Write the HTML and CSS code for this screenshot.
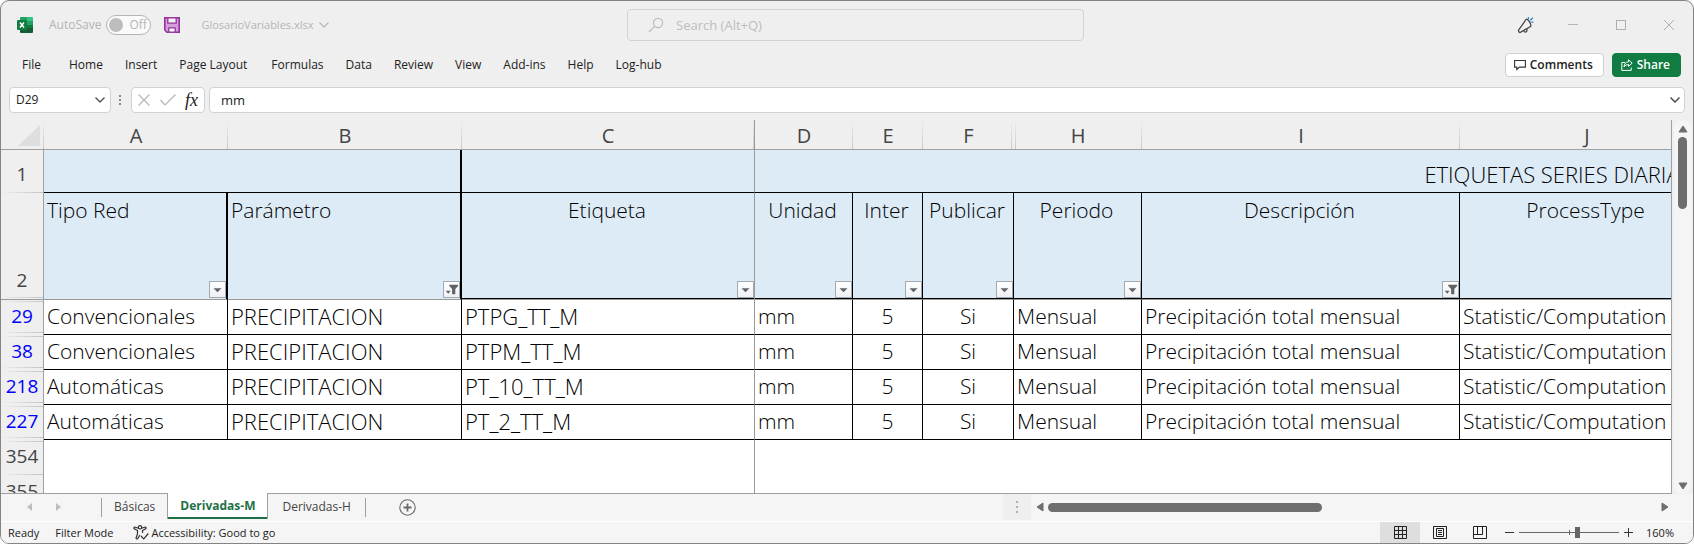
FILE: index.html
```html
<!DOCTYPE html>
<html lang="en">
<head>
<meta charset="utf-8">
<title>GlosarioVariables.xlsx</title>
<link rel="stylesheet" href="styles.css">
</head>
<body>
<svg class="defs" aria-hidden="true">
  <symbol id="drop" viewBox="0 0 17 17"><path d="M4 7h9l-4.500 4.500z" fill="#5f6367"/></symbol>
  <symbol id="funnel" viewBox="0 0 17 17"><path d="M6 3h10v1.500L12.800 8V14H9.200V8L6 4.500z" fill="#5f6367"/><path d="M2 10h5.500l-2.700 3.200z" fill="#5f6367"/></symbol>
</svg>
<div class="window">
  <header class="titlebar">
    <div class="title-left">
      <svg class="logo" width="16" height="16" viewBox="0 0 16 16"><path d="M4 0h6v4H3V1a1 1 0 0 1 1-1z" fill="#21a366"/><path d="M10 0h5a1 1 0 0 1 1 1v3h-6z" fill="#33c481"/><path d="M3 4h7v8H3z" fill="#107c41"/><path d="M10 4h6v4h-6z" fill="#21a366"/><path d="M10 8h6v4h-6z" fill="#107c41"/><path d="M3 11h13v4a1 1 0 0 1-1 1H4a1 1 0 0 1-1-1z" fill="#185c37"/><rect y="3" width="10" height="10" rx="1" fill="#107c41"/><path d="M3 5.500l4 5M7 5.500l-4 5" stroke="#fff" stroke-width="1.500"/></svg>
      <label class="autosave">AutoSave
        <span class="switch"><input type="checkbox" role="switch"><span class="off">Off</span></span>
      </label>
      <button class="plain save" aria-label="Save"><svg width="16" height="16" viewBox="0 0 16 16"><path d="M.8.8h14.400v14.400H3L.8 13z" fill="#d59ddb" stroke="#9332a0" stroke-width="1.600"/><path d="M3.800.8h8.400v5.400H3.800z" fill="#f5f0f6" stroke="#9332a0" stroke-width="1.300"/><path d="M4.800 15.200v-4.400h6.400v4.400z" fill="#fff" stroke="#9332a0" stroke-width="1.300"/></svg></button>
      <button class="plain filename">GlosarioVariables.xlsx<svg width="10" height="6" viewBox="0 0 10 6"><path d="M.5.5L5 5 9.500.5" fill="none" stroke="#b5b5b5" stroke-width="1.200"/></svg></button>
    </div>
    <label class="search">
      <svg width="16" height="16" viewBox="0 0 16 16"><circle cx="10" cy="6" r="4.600" fill="none" stroke="#bdbdbd" stroke-width="1.200"/><path d="M6.700 9.300L1 15" stroke="#bdbdbd" stroke-width="1.200"/></svg>
      <input type="text" placeholder="Search (Alt+Q)" aria-label="Search">
    </label>
    <div class="title-right">
      <button class="plain" aria-label="Coming soon"><svg width="17" height="17" viewBox="0 0 17 17"><path d="M9 2.500L1.500 13.200q-.4 1.800 1.500 2.300l11-6.300M9 2.500q1-1 3 1.500t2 5.200" fill="none" stroke="#444" stroke-width="1.300"/><path d="M6.500 13.500q1 2 2.500 1.500 1.500-.6.600-3.400" fill="none" stroke="#444" stroke-width="1.300"/><path d="M11.500 2V.3M13.300 3.200L15.800.8M14.200 5.200h2.300" stroke="#1e88c9" stroke-width="1.300"/></svg></button>
      <button class="plain" aria-label="Minimize"><svg width="10" height="10" viewBox="0 0 10 10"><path d="M0 4.500h10" stroke="#b5b5b5"/></svg></button>
      <button class="plain" aria-label="Maximize"><svg width="10" height="10" viewBox="0 0 10 10"><rect x=".5" y=".5" width="9" height="9" fill="none" stroke="#b0b0b0"/></svg></button>
      <button class="plain" aria-label="Close"><svg width="10" height="10" viewBox="0 0 10 10"><path d="M0 0l10 10M10 0L0 10" stroke="#b0b0b0"/></svg></button>
    </div>
  </header>

  <nav class="ribbon">
    <div class="menus">
      <button class="plain file">File</button><button class="plain">Home</button><button class="plain">Insert</button><button class="plain wide">Page Layout</button><button class="plain">Formulas</button><button class="plain">Data</button><button class="plain">Review</button><button class="plain">View</button><button class="plain">Add-ins</button><button class="plain">Help</button><button class="plain">Log-hub</button>
    </div>
    <div class="actions">
      <button class="action"><svg width="12" height="12" viewBox="0 0 12 12"><path d="M.6 1.500h10.800v6.600H5.500L2.800 10.500V8.100H.6z" fill="none" stroke="#333" stroke-width="1.100"/></svg>Comments</button>
      <button class="action share"><svg width="12" height="12" viewBox="0 0 12 12"><path d="M4 3.500H.8v7.900h9.400V8.500" fill="none" stroke="#fff"/><path d="M7.500.8l3.700 3.300-3.700 3.300V5.500Q4.300 5.500 3 8q.3-4.800 4.500-5.200z" fill="none" stroke="#fff"/></svg>Share</button>
    </div>
  </nav>

  <div class="formulabar">
    <div class="box namebox"><input type="text" value="D29" aria-label="Name box"><button class="plain" aria-label="Names"><svg width="10" height="6" viewBox="0 0 10 6"><path d="M.5.5L5 5 9.500.5" fill="none" stroke="#555" stroke-width="1.400"/></svg></button></div>
    <svg class="grip" width="3" height="12" viewBox="0 0 3 12"><path d="M0 1h2v2H0zM0 5h2v2H0zM0 9h2v2H0z" fill="#8a8a8a"/></svg>
    <div class="box entry">
      <button class="plain" aria-label="Cancel"><svg width="12" height="12" viewBox="0 0 12 12"><path d="M.5.5l11 11M11.500.5l-11 11" stroke="#b5b5b5" stroke-width="1.200"/></svg></button>
      <button class="plain" aria-label="Enter"><svg width="16" height="12" viewBox="0 0 16 12"><path d="M.5 6l4.500 5L15.500.5" fill="none" stroke="#b5b5b5" stroke-width="1.200"/></svg></button>
      <button class="plain fx" aria-label="Insert function">fx</button>
    </div>
    <div class="box formula"><input type="text" value="mm" aria-label="Formula"><button class="plain" aria-label="Expand"><svg width="10" height="6" viewBox="0 0 10 6"><path d="M.5.5L5 5 9.500.5" fill="none" stroke="#444" stroke-width="1.400"/></svg></button></div>
  </div>

  <main class="sheet">
    <div class="grid">
      <table>
        <colgroup><col class="c-rows"><col class="c-a"><col class="c-b"><col class="c-c"><col class="c-d"><col class="c-e"><col class="c-f"><col class="c-h"><col class="c-i"><col class="c-j"><col class="c-k"></colgroup>
        <thead>
          <tr class="letters"><th class="corner"><svg width="22" height="21" viewBox="0 0 22 21"><path d="M22 0v21H0z" fill="#dedede"/></svg></th><th>A</th><th>B</th><th class="frozen">C</th><th>D</th><th>E</th><th class="before-hidden">F</th><th class="after-hidden">H</th><th>I</th><th>J</th><th></th></tr>
        </thead>
        <tbody>
          <tr class="band"><th class="row">1</th><td colspan="2" class="thick"></td><td class="frozen"></td><td colspan="7">ETIQUETAS SERIES DIARIAS</td></tr>
          <tr class="names"><th class="row above">2</th>
            <td class="thick first">Tipo Red<button class="filter" aria-label="Filter Tipo Red"><svg><use href="#drop"/></svg></button></td>
            <td class="thick first">Parámetro<button class="filter" aria-label="Filter Parámetro"><svg><use href="#funnel"/></svg></button></td>
            <td class="frozen">Etiqueta<button class="filter" aria-label="Filter Etiqueta"><svg><use href="#drop"/></svg></button></td>
            <td>Unidad<button class="filter" aria-label="Filter Unidad"><svg><use href="#drop"/></svg></button></td>
            <td>Inter<button class="filter" aria-label="Filter Inter"><svg><use href="#drop"/></svg></button></td>
            <td>Publicar<button class="filter" aria-label="Filter Publicar"><svg><use href="#drop"/></svg></button></td>
            <td>Periodo<button class="filter" aria-label="Filter Periodo"><svg><use href="#drop"/></svg></button></td>
            <td>Descripción<button class="filter" aria-label="Filter Descripción"><svg><use href="#funnel"/></svg></button></td>
            <td>ProcessType</td><td></td></tr>
          <tr class="data"><th class="row both">29</th><td>Convencionales</td><td class="code">PRECIPITACION</td><td class="code frozen">PTPG_TT_M</td><td>mm</td><td class="mid">5</td><td class="mid">Si</td><td>Mensual</td><td>Precipitación total mensual</td><td>Statistic/Computation</td><td></td></tr>
          <tr class="data"><th class="row both">38</th><td>Convencionales</td><td class="code">PRECIPITACION</td><td class="code frozen">PTPM_TT_M</td><td>mm</td><td class="mid">5</td><td class="mid">Si</td><td>Mensual</td><td>Precipitación total mensual</td><td>Statistic/Computation</td><td></td></tr>
          <tr class="data"><th class="row both">218</th><td>Automáticas</td><td class="code">PRECIPITACION</td><td class="code frozen">PT_10_TT_M</td><td>mm</td><td class="mid">5</td><td class="mid">Si</td><td>Mensual</td><td>Precipitación total mensual</td><td>Statistic/Computation</td><td></td></tr>
          <tr class="data"><th class="row both">227</th><td>Automáticas</td><td class="code">PRECIPITACION</td><td class="code frozen">PT_2_TT_M</td><td>mm</td><td class="mid">5</td><td class="mid">Si</td><td>Mensual</td><td>Precipitación total mensual</td><td>Statistic/Computation</td><td></td></tr>
          <tr class="blank"><th class="row below">354</th><td colspan="2"></td><td class="frozen"></td><td colspan="7"></td></tr>
          <tr class="blank"><th class="row">355</th><td colspan="2"></td><td class="frozen"></td><td colspan="7"></td></tr>
        </tbody>
      </table>
    </div>
    <div class="vscroll">
      <svg width="10" height="8" viewBox="0 0 10 8"><path d="M5 1l4 6H1z" fill="#6e6e6e" stroke="#6e6e6e" stroke-linejoin="round"/></svg>
      <div class="track"><div class="thumb"></div></div>
      <svg width="10" height="8" viewBox="0 0 10 8"><path d="M5 7l4-6H1z" fill="#6e6e6e" stroke="#6e6e6e" stroke-linejoin="round"/></svg>
    </div>
  </main>

  <div class="tabbar">
    <div class="tabnav">
      <button class="plain" aria-label="Previous sheet"><svg width="5" height="8" viewBox="0 0 5 8"><path d="M5 0v8L0 4z" fill="#bdbdbd"/></svg></button>
      <button class="plain" aria-label="Next sheet"><svg width="5" height="8" viewBox="0 0 5 8"><path d="M0 0v8l5-4z" fill="#bdbdbd"/></svg></button>
    </div>
    <button class="plain tab">Básicas</button>
    <button class="plain tab active">Derivadas-M</button>
    <button class="plain tab last">Derivadas-H</button>
    <button class="plain add" aria-label="New sheet"><svg width="17" height="17" viewBox="0 0 17 17"><circle cx="8.500" cy="8.500" r="7.700" fill="none" stroke="#6a6a6a" stroke-width="1.100"/><path d="M8.500 4.500v8M4.500 8.500h8" stroke="#6a6a6a" stroke-width="1.800"/></svg></button>
    <div class="splitter"><svg width="2" height="12" viewBox="0 0 2 12"><path d="M0 0h2v2H0zM0 5h2v2H0zM0 10h2v2H0z" fill="#b0b0b0"/></svg></div>
    <div class="hscroll">
      <svg width="8" height="10" viewBox="0 0 8 10"><path d="M1 5l6-4v8z" fill="#6e6e6e" stroke="#6e6e6e" stroke-linejoin="round"/></svg>
      <div class="track"><div class="thumb"></div></div>
      <svg width="8" height="10" viewBox="0 0 8 10"><path d="M7 5L1 1v8z" fill="#6e6e6e" stroke="#6e6e6e" stroke-linejoin="round"/></svg>
    </div>
  </div>

  <footer class="status">
    <span>Ready</span><span class="mode">Filter Mode</span>
    <button class="plain access"><svg width="16" height="15" viewBox="0 0 16 15"><g fill="none" stroke="#333" stroke-width="1.200"><circle cx="7" cy="2.300" r="1.700"/><path d="M5.300 3.200L2 2Q.6 2 1 3.500L4.500 5.500V9L3 13q.2 1.400 1.600.8L7 10M8.700 3.200L12 2q1.400 0 1 1.500L9.500 5.500V8"/><path d="M8 11l2.700 2.800L15.300 8.500"/></g></svg>Accessibility: Good to go</button>
    <div class="views">
      <button class="plain view on" aria-label="Normal"><svg width="13" height="13" viewBox="0 0 13 13"><path d="M.5.5h12v12H.5zM4.500 0v13M8.500 0v13M0 4.500h13M0 8.500h13" fill="none" stroke="#222"/></svg></button>
      <button class="plain view" aria-label="Page layout"><svg width="14" height="13" viewBox="0 0 14 13"><path d="M.5.500h13v12H.5zM3.500 2.500h7v8h-7zM5 4.500h4M5 6.500h4M5 8.500h4" fill="none" stroke="#222"/></svg></button>
      <button class="plain view" aria-label="Page break preview"><svg width="14" height="13" viewBox="0 0 14 13"><path d="M.5.5h13v12H.5zM.5 8.500h9V.5M4.500.5v8" fill="none" stroke="#222"/></svg></button>
    </div>
    <div class="zoom">
      <button class="plain" aria-label="Zoom out"><svg width="9" height="9" viewBox="0 0 9 9"><path d="M0 4.500h9" stroke="#333"/></svg></button>
      <input type="range" min="10" max="210" value="128" aria-label="Zoom">
      <button class="plain" aria-label="Zoom in"><svg width="9" height="9" viewBox="0 0 9 9"><path d="M0 4.500h9M4.500 0v9" stroke="#333"/></svg></button>
      <button class="plain percent">160%</button>
    </div>
  </footer>
</div>
</body>
</html>
```

FILE: styles.css
```css
* { box-sizing: border-box; }
body { margin: 0; background: #fff; font: 12px/16px "Open Sans", "Noto Sans", sans-serif; color: #222; }
.defs { position: absolute; width: 0; height: 0; }
svg { display: block; flex: none; }
input { font: inherit; color: inherit; border: 0; background: none; padding: 0; min-width: 0; outline: 0; }
.plain { display: flex; align-items: center; border: 0; background: none; padding: 0; margin: 0; font: inherit; color: inherit; white-space: nowrap; }

.window { display: flex; flex-direction: column; height: 100vh; border: 1px solid #848484; border-radius: 9px; background: #efefef; overflow: hidden; }

.titlebar { display: flex; align-items: center; height: 46px; padding-top: 2px; color: #b5b5b5; }
.title-left { display: flex; align-items: center; width: 37%; padding-left: 16px; }
.autosave { display: flex; align-items: center; gap: 5px; margin-left: 16px; }
.switch { display: flex; align-items: center; gap: 6px; width: 45px; height: 20px; padding: 0 4px 0 2px; border: 1px solid #b5b5b5; border-radius: 10px; background: #fafafa; }
.switch input { appearance: none; width: 14px; height: 14px; margin: 0; border-radius: 50%; background: #bdbdbd; flex: none; }
.save { margin-left: 13px; }
.filename { margin-left: 21px; gap: 6px; font-size: 11px; }
.search { display: flex; align-items: center; gap: 12px; width: 27%; height: 32px; padding-left: 20px; border: 1px solid #d2d2d2; border-radius: 4px; }
.search input { flex: 1; font-size: 13px; }
.search input::placeholder { color: #bdbdbd; opacity: 1; }
.title-right { display: flex; align-items: center; gap: 38px; margin-left: auto; padding-right: 19px; }
.title-right .plain:first-child { margin-right: -4px; }

.ribbon { display: flex; align-items: center; justify-content: space-between; height: 36px; padding: 0 12px 0 21px; }
.menus { display: flex; gap: 22px; }
.file { margin-right: 6px; }
.wide { margin-right: 2px; }
.actions { display: flex; gap: 8px; }
.action { display: flex; align-items: center; gap: 4px; height: 24px; padding: 0 10px 0 8px; border: 1px solid #d0d0d0; border-radius: 4px; background: #fff; font: 600 12px/16px "Open Sans", sans-serif; color: #222; }
.share { border-color: #107c41; background: #107c41; color: #fff; }

.formulabar { display: flex; align-items: center; height: 37px; padding: 4px 8px 7px; }
.box { display: flex; align-items: center; height: 26px; border: 1px solid #d2d2d2; border-radius: 4px; background: #fff; }
.namebox { width: 102px; padding: 0 5px 0 6px; }
.namebox input { flex: 1; width: 40px; }
.grip { margin: 0 9px 0 8px; }
.entry { width: 74px; padding: 0 6px; justify-content: space-between; }
.fx { font: italic 400 18px/20px "Liberation Serif", serif; color: #222; }
.formula { flex: 1; margin-left: 4px; padding: 0 4px 0 11px; }
.formula input { flex: 1; font-size: 13px; }

.sheet { display: flex; flex: 1; min-height: 0; }
.grid { flex: 1; min-width: 0; overflow: hidden; background: #fff; border-right: 1px solid #a0a0a0; border-bottom: 1px solid #a0a0a0; }
table { width: 2364px; table-layout: fixed; border-collapse: separate; border-spacing: 0; font: 300 21px/30px "Open Sans", sans-serif; color: #000; }
.c-rows { width: 43px; } .c-a { width: 184px; } .c-b { width: 234px; } .c-c { width: 293px; } .c-d { width: 98px; } .c-e { width: 70px; } .c-f { width: 91px; } .c-h { width: 128px; } .c-i { width: 318px; } .c-j { width: 254px; } .c-k { width: 651px; }
th, td { padding: 0; overflow: hidden; white-space: nowrap; vertical-align: bottom; }
th { font-weight: 400; font-size: 20px; line-height: 27px; color: #444; background-color: #efefef; background-repeat: no-repeat; }

.letters th { height: 30px; border-bottom: 1px solid #a0a0a0; background-image: linear-gradient(#efefef, #c8c8c8); background-size: 1px 100%; background-position: right; }
.letters .frozen { border-right: 1px solid #999; }
.letters .before-hidden { background-position: right 2px top; }
.letters .after-hidden { background-image: linear-gradient(#efefef, #c8c8c8), linear-gradient(#efefef, #c8c8c8); background-position: left 1px top, right; }
.corner { padding-left: 17px; }
.corner svg { margin-bottom: 3px; }

.row { padding-bottom: 5px; border-right: 1px solid #a0a0a0; font-size: 19px; background-image: linear-gradient(90deg, #efefef, #c4c4c4), linear-gradient(90deg, #efefef, #c4c4c4); background-size: 100% 1px; background-position: bottom; }
.row.above { border-bottom: 1px solid #999; background-position: left bottom 1px; }
.row.both { color: #00f; background-position: left bottom 2px, left top 1px; }
.row.below { background-position: left bottom, left top 1px; }

td { border-right: 1px solid #000; border-bottom: 1px solid #000; }
td.thick { border-right-width: 2px; }
td.frozen { border-right-color: #999; }
.band td, .names td { background: #ddebf6; text-align: center; }
.band td { height: 43px; padding: 0 3px 3px 0; font-size: 22px; }
.names td { position: relative; height: 107px; padding: 2px 2px 0 0; vertical-align: top; border-bottom-color: #999; box-shadow: inset 0 -1px #000; }
.names td.first { padding-left: 3px; text-align: left; box-shadow: none; }
.data td { height: 35px; padding: 0 0 3px 3px; }
.data .code { font-size: 22px; }
.data .mid { padding-left: 0; text-align: center; }
.blank td { height: 35px; border-width: 0; }
.blank .frozen { border-right-width: 1px; }

.filter { position: absolute; right: 0; bottom: 1px; width: 17px; height: 17px; padding: 0; border: 1px solid #a3abb2; background: linear-gradient(#fff, #eef0f3); }
.filter svg { width: 15px; height: 15px; }

.vscroll { display: flex; flex-direction: column; align-items: center; gap: 4px; width: 17px; margin: 0 2px; padding: 5px 0 4px; border-radius: 8px; background: #f5f5f5; }
.vscroll .track { flex: 1; width: 9px; }
.vscroll .thumb { height: 21%; border-radius: 5px; background: #6e6e6e; }

.tabbar { display: flex; align-items: center; height: 27px; padding-bottom: 1px; background: #f5f5f5; color: #444; }
.tabnav { display: flex; align-items: center; gap: 24px; width: 101px; height: 19px; padding-left: 26px; border-right: 1px solid #a0a0a0; }
.tab { padding: 0 12px; height: 19px; }
.tab.active { position: relative; align-self: flex-start; height: 26px; margin-top: -1px; padding: 0 12px; border: solid #a0a0a0; border-width: 0 1px; box-shadow: inset 0 -2px #1e7145; background: #fff; color: #1e7145; font-weight: 700; }
.tab.last { padding: 0 14px; border-right: 1px solid #a0a0a0; }
.add { margin-left: 33px; }
.splitter { display: flex; align-items: center; justify-content: center; width: 28px; height: 26px; margin-left: auto; background: #efefef; }
.hscroll { display: flex; align-items: center; gap: 4px; width: 38%; margin-right: 19px; padding: 0 5px; }
.hscroll .track { flex: 1; }
.hscroll .thumb { width: 45%; height: 9px; border-radius: 5px; background: #6e6e6e; }

.status { display: flex; align-items: center; height: 22px; padding: 0 19px 0 7px; border-top: 1px solid #fff; background: #f5f5f5; font-size: 11px; }
.mode { margin-left: 16px; }
.access { gap: 2px; margin-left: 20px; }
.views { display: flex; margin-left: auto; }
.view { justify-content: center; width: 40px; height: 21px; }
.view.on { background: #dedede; }
.zoom { display: flex; align-items: center; margin-left: 5px; }
.zoom input { appearance: none; width: 100px; height: 14px; margin: 0 5px; background: linear-gradient(#666, #666) center / 100% 1px no-repeat, linear-gradient(#666, #666) center / 1px 5px no-repeat; }
.zoom input::-webkit-slider-thumb { appearance: none; width: 5px; height: 11px; background: #666; }
.percent { margin-left: 13px; }
```
